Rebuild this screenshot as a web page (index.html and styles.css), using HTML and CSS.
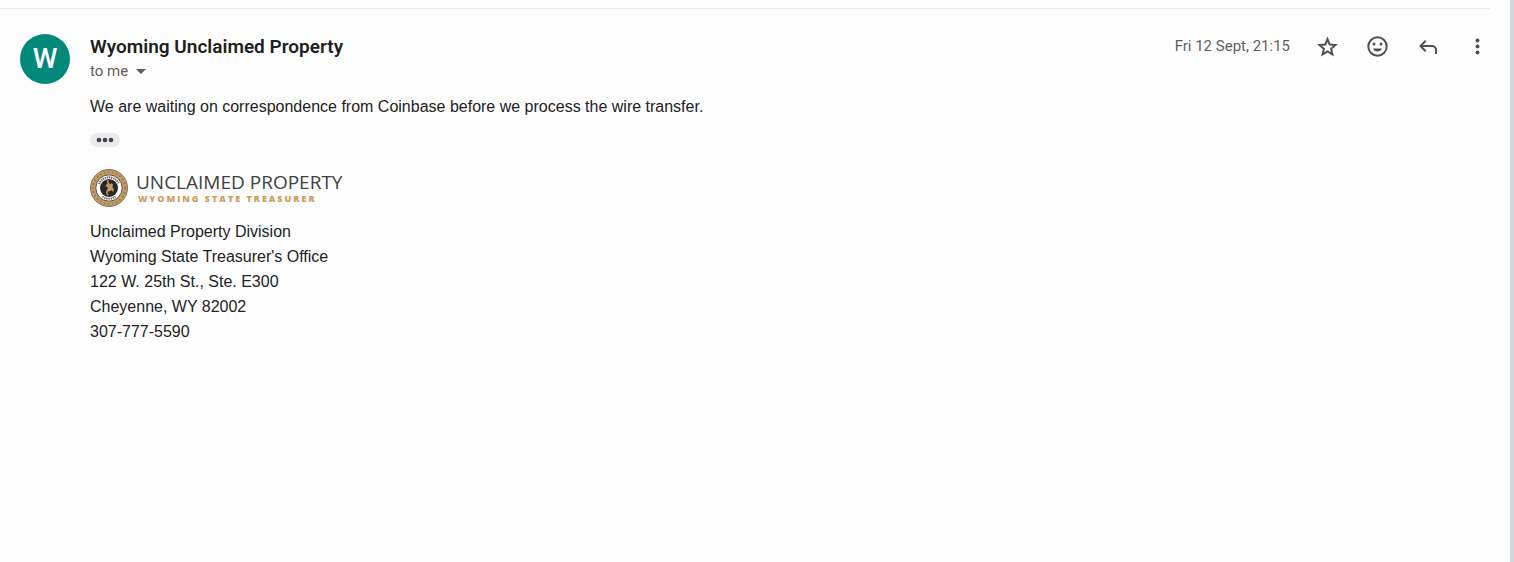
FILE: index.html
```html
<!DOCTYPE html>
<html lang="en-GB">
<head>
    <meta charset="UTF-8">
    <meta name="viewport" content="width=device-width, initial-scale=1.0">
    <title>Wyoming Unclaimed Property</title>
    <link rel="stylesheet" href="styles.css">
</head>
<body>
    <main class="thread">
        <article class="message">
            <div class="avatar">W</div>

            <div class="content">
                <header class="message-header">
                    <div>
                        <h1 class="sender">Wyoming Unclaimed Property</h1>
                        <button class="recipient" type="button">
                            to me
                            <svg width="10" height="5" viewBox="0 0 10 5"><path d="M0 0h10L5 5z"/></svg>
                        </button>
                    </div>

                    <div class="actions">
                        <time class="date" datetime="2025-09-12T21:15">Fri 12 Sept, 21:15</time>
                        <button class="icon-btn" type="button" aria-label="Star">
                            <svg viewBox="0 0 24 24"><path d="M11.5 5.2l2.2 5.3 5.8.5-4.4 3.8 1.3 5.7-4.9-3-4.9 3 1.3-5.7L3.5 11l5.8-.5z" fill="none" stroke="currentColor" stroke-width="2"/></svg>
                        </button>
                        <button class="icon-btn" type="button" aria-label="Add reaction">
                            <svg viewBox="0 0 24 24">
                                <circle cx="11.5" cy="12.5" r="9.2" fill="none" stroke="currentColor" stroke-width="2"/>
                                <circle cx="8" cy="10" r="1.5"/>
                                <circle cx="15" cy="10" r="1.5"/>
                                <path d="M7 14.5h9c-.7 1.9-2.4 3-4.5 3s-3.8-1.1-4.5-3z"/>
                            </svg>
                        </button>
                        <button class="icon-btn" type="button" aria-label="Reply">
                            <svg viewBox="0 0 24 24"><path d="M19 20v-4c0-1.7-1.3-3-3-3H6.8l3.6 3.6L9 18l-6-6 6-6 1.4 1.4L6.8 11H16c2.8 0 5 2.2 5 5v4z"/></svg>
                        </button>
                        <button class="icon-btn" type="button" aria-label="More">
                            <svg viewBox="0 0 24 24"><circle cx="11.5" cy="6.5" r="2"/><circle cx="11.5" cy="12.5" r="2"/><circle cx="11.5" cy="18.5" r="2"/></svg>
                        </button>
                    </div>
                </header>

                <div class="message-body">
                    <p>We are waiting on correspondence from Coinbase before we process the wire transfer.</p>

                    <button class="trimmed" type="button" aria-label="Show trimmed content">
                        <svg width="18" height="6" viewBox="0 0 18 6"><circle cx="3" cy="3" r="2.3"/><circle cx="9" cy="3" r="2.3"/><circle cx="15" cy="3" r="2.3"/></svg>
                    </button>

                    <div class="logo">
                        <svg class="seal" viewBox="0 0 38 38">
                            <circle cx="19" cy="19" r="18.5" fill="#c49a62" stroke="#7d705f"/>
                            <circle cx="19" cy="19" r="16" fill="none" stroke="#8f7048" stroke-width="1.5" stroke-dasharray="1.5 2.6"/>
                            <circle cx="19" cy="19" r="13.2" fill="#fff" stroke="#5b5248"/>
                            <path d="M9 15a10.8 10.8 0 0 1 20 0M12.5 27.5a10.8 10.8 0 0 0 13 0" fill="none" stroke="#66615b" stroke-width="2" stroke-dasharray="1.3 .8"/>
                            <circle cx="19" cy="19" r="9" fill="#2b2724"/>
                            <!-- bucking horse and rider -->
                            <path d="M16.5 10.5l2 .5v2.5l2 2 1-1.5 1.5 1.5-.5 2.5 1.5 2.5-1 3-1-2.5-1.5 1-2.5.5-.5 1.5 1.5 2-1.5.5-1.5-2.5.5-2.5 1.5-2-1-2-1.5.5.5-2 1.5-1.5z" fill="#c49a62"/>
                        </svg>
                        <div>
                            <div class="logo-title">UNCLAIMED PROPERTY</div>
                            <div class="logo-subtitle">WYOMING STATE TREASURER</div>
                        </div>
                    </div>

                    <address class="signature">
                        Unclaimed Property Division<br>
                        Wyoming State Treasurer's Office<br>
                        122 W. 25th St., Ste. E300<br>
                        Cheyenne, WY 82002<br>
                        307-777-5590
                    </address>
                </div>
            </div>
        </article>
    </main>
</body>
</html>
```

FILE: styles.css
```css
* {
    margin: 0;
    padding: 0;
    box-sizing: border-box;
}

body {
    min-height: 100vh;
    background: #fefefe;
    border-right: 4px solid #d3d5dc;
    color: #222;
    font-family: "Liberation Sans", Arial, sans-serif;
    font-size: 16px;
    padding: 8px 20px 0 0;
}

button {
    border: 0;
    background: none;
    font: inherit;
    color: inherit;
    cursor: pointer;
}

svg {
    display: block;
    fill: currentColor;
}

.thread {
    border-top: 1px solid #e8eaed;
}

.message {
    display: flex;
    gap: 20px;
    padding: 25px 0 20px 20px;
}

.avatar {
    flex: none;
    width: 50px;
    height: 50px;
    border-radius: 50%;
    background: #00897b;
    color: #fff;
    font: 500 28px/50px Roboto, sans-serif;
    text-align: center;
}

.content {
    flex: 1;
}

.message-header {
    display: flex;
    justify-content: space-between;
    align-items: flex-start;
}

.sender {
    color: #1f1f1f;
    font: 600 19px/25px Roboto, sans-serif;
}

.recipient {
    display: flex;
    align-items: center;
    gap: 8px;
    color: #5e5e5e;
    font: 15px/24px Roboto, sans-serif;
}

.actions {
    display: flex;
    align-items: center;
    gap: 26px;
    color: #5e5e5e;
}

.date {
    font: 15px/24px Roboto, sans-serif;
}

.icon-btn {
    width: 24px;
    color: #505050;
}

.message-body {
    padding-top: 12px;
    line-height: 24px;
}

.trimmed {
    display: flex;
    align-items: center;
    justify-content: center;
    width: 30px;
    height: 14px;
    margin-top: 14px;
    border-radius: 7px;
    background: #e8eaed;
    color: #444;
}

.logo {
    display: flex;
    align-items: center;
    gap: 8px;
    margin-top: 22px;
}

.seal {
    width: 38px;
    height: 38px;
}

.logo-title {
    color: #414042;
    font: 19px/22px "Open Sans", sans-serif;
}

.logo-subtitle {
    padding-left: 2px;
    color: #cc9c62;
    font: 800 9px/12px "Open Sans", sans-serif;
    letter-spacing: 2px;
}

.signature {
    margin-top: 12px;
    font-style: normal;
    line-height: 25px;
}
```
